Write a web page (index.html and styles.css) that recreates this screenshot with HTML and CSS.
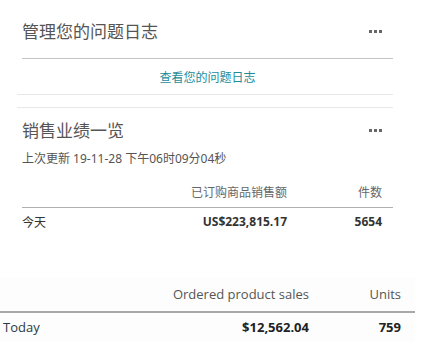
FILE: index.html
```html
<!DOCTYPE html>
<html lang="zh">
<head>
<meta charset="utf-8">
<link rel="stylesheet" href="styles.css">
</head>
<body>
<section class="card issues">
  <div class="card-head">
    <h2 class="title">管理您的问题日志</h2>
    <span class="more"><i></i><i></i><i></i></span>
  </div>
  <div class="link-row"><a class="link" href="#">查看您的问题日志</a></div>
</section>
<div class="spacer"></div>
<section class="card sales">
  <div class="card-head">
    <h2 class="title">销售业绩一览</h2>
    <span class="more"><i></i><i></i><i></i></span>
  </div>
  <p class="updated">上次更新 19-11-28 下午06时09分04秒</p>
  <div class="grid zh">
    <div class="th"></div>
    <div class="th num">已订购商品销售额</div>
    <div class="th num units">件数</div>
    <div class="td">今天</div>
    <div class="td num strong">US$223,815.17</div>
    <div class="td num units strong">5654</div>
  </div>
</section>
<section class="en-table">
  <div class="grid en">
    <div class="th"></div>
    <div class="th num">Ordered product sales</div>
    <div class="th num units">Units</div>
    <div class="td label">Today</div>
    <div class="td num strong">$12,562.04</div>
    <div class="td num units strong">759</div>
  </div>
</section>
</body>
</html>
```
FILE: styles.css
```css
html, body {
  margin: 0;
  padding: 0;
  background: #ffffff;
}
body {
  width: 423px;
  height: 361px;
  overflow: hidden;
  font-family: "Open Sans", "Noto Sans CJK SC", sans-serif;
  color: #444;
}
.card {
  margin-left: 22px;
  width: 371px;
}
.card-head {
  display: flex;
  align-items: center;
  justify-content: space-between;
  height: 20px;
}
.issues .card-head {
  padding-top: 21px;
  padding-bottom: 17px;
  border-bottom: 1px solid #c4c4c4;
}
.title {
  margin: 0;
  font-size: 17px;
  font-weight: 400;
  line-height: 20px;
  color: #555;
  font-family: "Noto Sans CJK SC", sans-serif;
}
.more {
  display: flex;
  gap: 2px;
  margin-right: 11px;
}
.more i {
  display: block;
  width: 3px;
  height: 3px;
  background: #666;
}
.link-row {
  height: 35px;
  display: flex;
  align-items: center;
  justify-content: center;
}
.link {
  font-size: 12px;
  color: #1d8c9a;
  text-decoration: none;
  font-family: "Noto Sans CJK SC", sans-serif;
}
.spacer {
  margin-left: 17px;
  width: 376px;
  height: 12px;
  border-top: 1px solid #e8e8e8;
  border-bottom: 1px solid #e8e8e8;
}
.sales .card-head {
  padding-top: 12px;
}
.updated {
  margin: 12px 0 0;
  font-size: 12px;
  line-height: 14px;
  color: #555;
  font-family: "Noto Sans", "Noto Sans CJK SC", sans-serif;
}
.grid {
  display: grid;
}
.grid.zh {
  grid-template-columns: 1fr 160px 106px;
  margin-top: 13px;
  font-size: 12px;
}
.grid.zh .th {
  height: 28px;
  line-height: 26px;
  border-bottom: 1px solid #b0b0b0;
  color: #666;
  font-family: "Noto Sans CJK SC", sans-serif;
}
.grid.zh .td {
  line-height: 28px;
  color: #333;
}
.grid .num {
  text-align: right;
}
.grid.zh .units {
  padding-right: 11px;
}
.grid.zh .td:not(.num) {
  font-family: "Noto Sans CJK SC", sans-serif;
}
.strong {
  font-weight: 700;
}
.en-table {
  margin-top: 42px;
  width: 415px;
  background: #fdfdfd;
}
.grid.en {
  grid-template-columns: 1fr 200px 106px;
  font-size: 13px;
}
.grid.en .th {
  height: 33px;
  line-height: 32px;
  border-bottom: 2px solid #a8a8a8;
  color: #555;
  white-space: nowrap;
}
.grid.en .td {
  line-height: 28px;
  color: #222;
}
.grid.en .label {
  padding-left: 3px;
  color: #2a3a44;
}
.grid.en .units {
  padding-right: 14px;
}
```
